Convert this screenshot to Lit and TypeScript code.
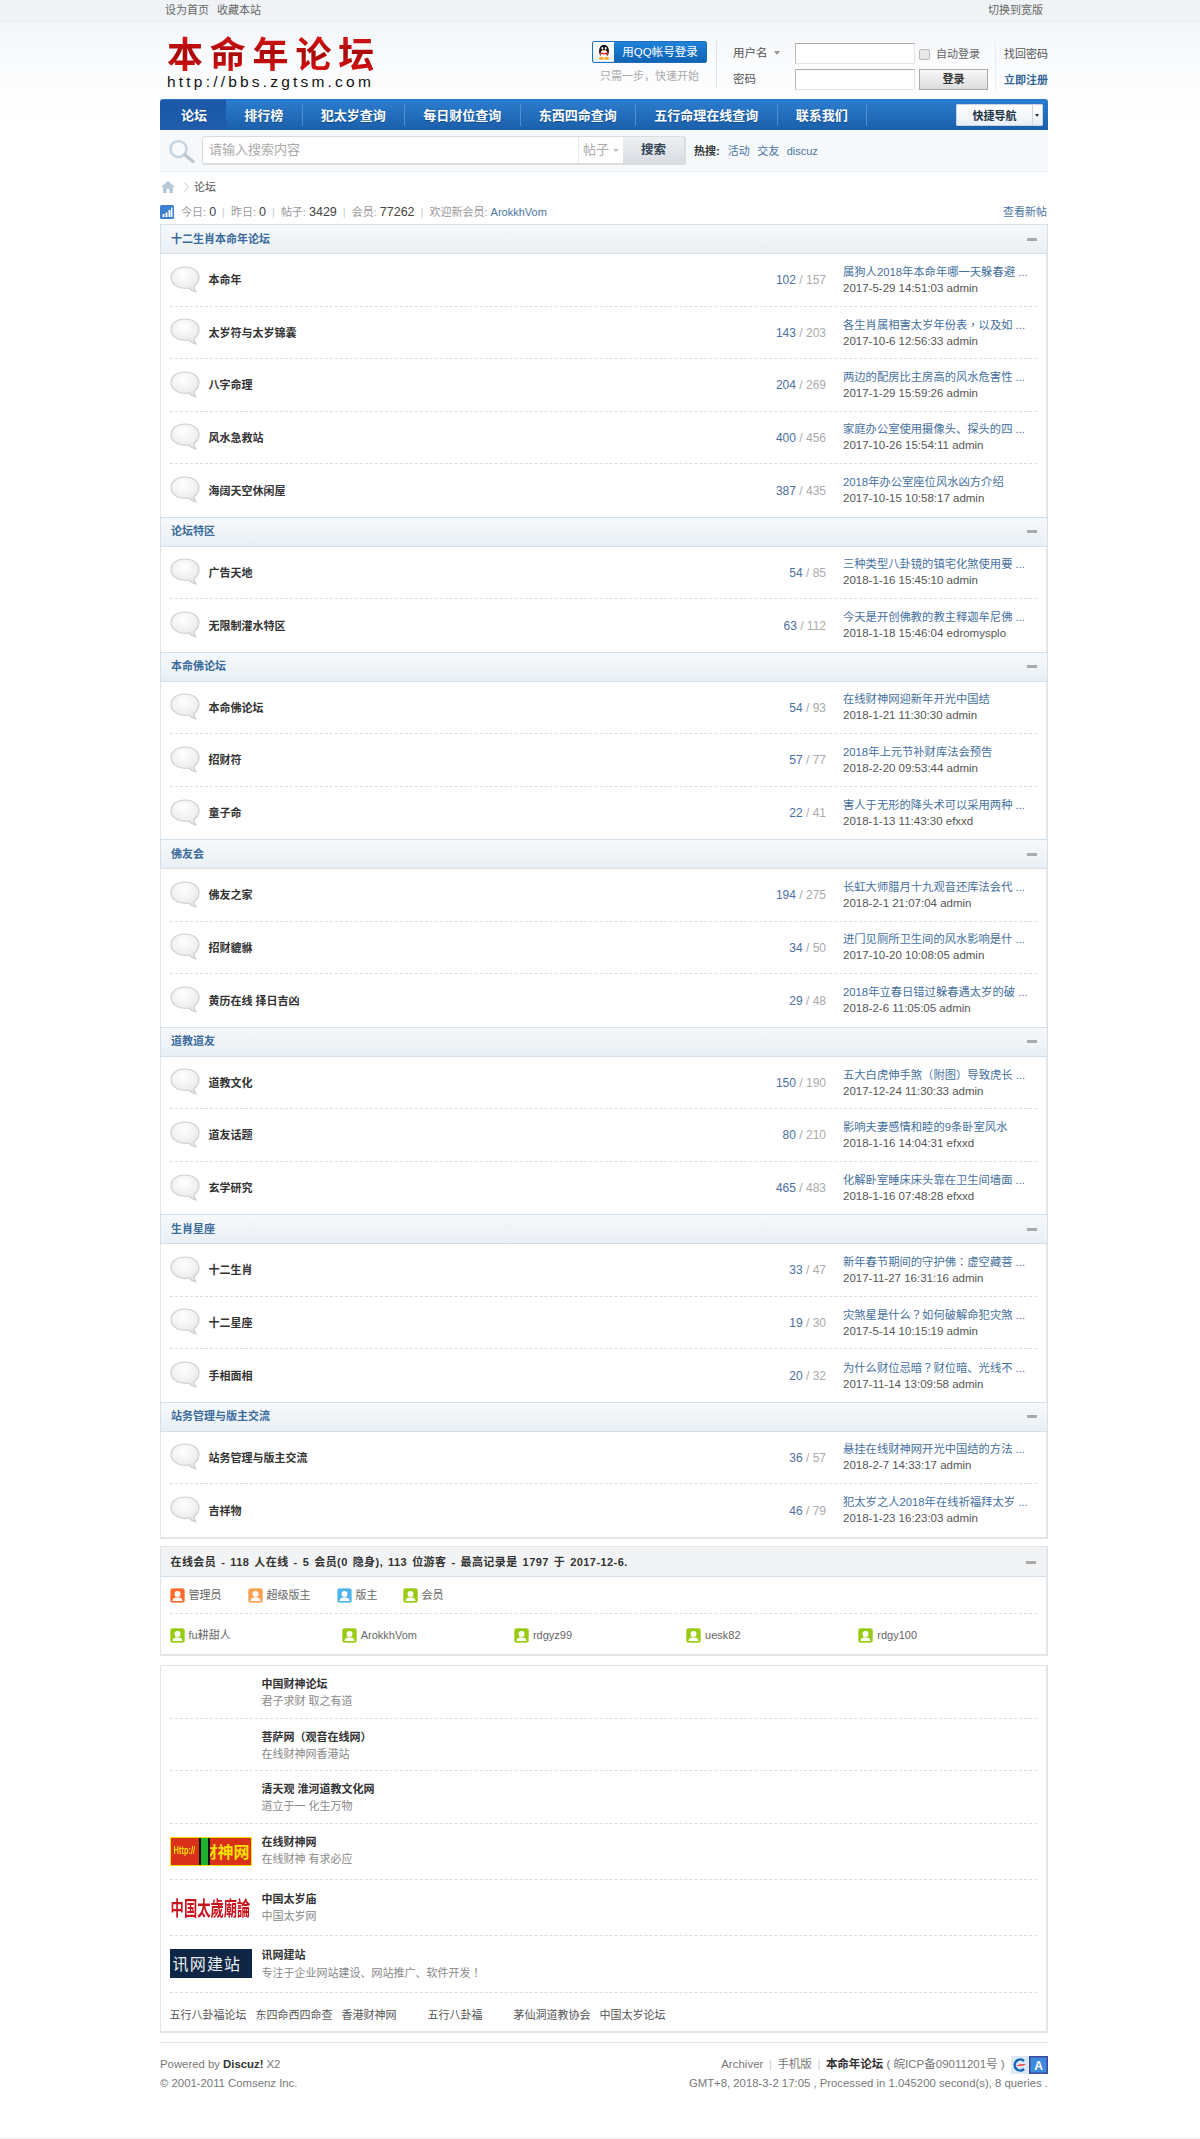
import { LitElement, html, css, svg } from "lit";
import { customElement } from "lit/decorators.js";

type Row = [string, number, number, string, string];
const sections: { name: string; rows: Row[] }[] = [
  { name: "十二生肖本命年论坛", rows: [
    ["本命年", 102, 157, "属狗人2018年本命年哪一天躲春避 ...", "2017-5-29 14:51:03 admin"],
    ["太岁符与太岁锦囊", 143, 203, "各生肖属相害太岁年份表，以及如 ...", "2017-10-6 12:56:33 admin"],
    ["八字命理", 204, 269, "两边的配房比主房高的风水危害性 ...", "2017-1-29 15:59:26 admin"],
    ["风水急救站", 400, 456, "家庭办公室使用摄像头、探头的四 ...", "2017-10-26 15:54:11 admin"],
    ["海阔天空休闲屋", 387, 435, "2018年办公室座位风水凶方介绍", "2017-10-15 10:58:17 admin"],
  ]},
  { name: "论坛特区", rows: [
    ["广告天地", 54, 85, "三种类型八卦镜的镇宅化煞使用要 ...", "2018-1-16 15:45:10 admin"],
    ["无限制灌水特区", 63, 112, "今天是开创佛教的教主释迦牟尼佛 ...", "2018-1-18 15:46:04 edromysplo"],
  ]},
  { name: "本命佛论坛", rows: [
    ["本命佛论坛", 54, 93, "在线财神网迎新年开光中国结", "2018-1-21 11:30:30 admin"],
    ["招财符", 57, 77, "2018年上元节补财库法会预告", "2018-2-20 09:53:44 admin"],
    ["童子命", 22, 41, "害人于无形的降头术可以采用两种 ...", "2018-1-13 11:43:30 efxxd"],
  ]},
  { name: "佛友会", rows: [
    ["佛友之家", 194, 275, "长虹大师腊月十九观音还库法会代 ...", "2018-2-1 21:07:04 admin"],
    ["招财貔貅", 34, 50, "进门见厕所卫生间的风水影响是什 ...", "2017-10-20 10:08:05 admin"],
    ["黄历在线 择日吉凶", 29, 48, "2018年立春日错过躲春遇太岁的破 ...", "2018-2-6 11:05:05 admin"],
  ]},
  { name: "道教道友", rows: [
    ["道教文化", 150, 190, "五大白虎伸手煞（附图）导致虎长 ...", "2017-12-24 11:30:33 admin"],
    ["道友话题", 80, 210, "影响夫妻感情和睦的9条卧室风水", "2018-1-16 14:04:31 efxxd"],
    ["玄学研究", 465, 483, "化解卧室睡床床头靠在卫生间墙面 ...", "2018-1-16 07:48:28 efxxd"],
  ]},
  { name: "生肖星座", rows: [
    ["十二生肖", 33, 47, "新年春节期间的守护佛：虚空藏菩 ...", "2017-11-27 16:31:16 admin"],
    ["十二星座", 19, 30, "灾煞星是什么？如何破解命犯灾煞 ...", "2017-5-14 10:15:19 admin"],
    ["手相面相", 20, 32, "为什么财位忌暗？财位暗、光线不 ...", "2017-11-14 13:09:58 admin"],
  ]},
  { name: "站务管理与版主交流", rows: [
    ["站务管理与版主交流", 36, 57, "悬挂在线财神网开光中国结的方法 ...", "2018-2-7 14:33:17 admin"],
    ["吉祥物", 46, 79, "犯太岁之人2018年在线祈福拜太岁 ...", "2018-1-23 16:23:03 admin"],
  ]},
];

const navItems: [string, boolean][] = [
  ["论坛", true], ["排行榜", false], ["犯太岁查询", false], ["每日财位查询", false],
  ["东西四命查询", false], ["五行命理在线查询", false], ["联系我们", false],
];

/* Centred full-width punctuation, as in the reference's CJK face. */
const punct = (s: string) =>
  s.split(/([，？：！（）])/).map((part, i) => (i % 2 ? html`<span class="pu">${part}</span>` : part));

const userIcon = (c: string, d: string) => html`<svg class="uicon" viewBox="0 0 15 15" width="15" height="15">
  <rect x=".5" y=".5" width="14" height="14" rx="2" fill=${c} stroke=${d}></rect>
  <circle cx="7.5" cy="6" r="3" fill="#fff"></circle>
  <path d="M2.5 13 C3 10 5 9.6 7.5 9.6 S12 10 12.5 13 Z" fill="#fff"></path>
</svg>`;

const bubble = svg`<svg class="bubble" viewBox="0 0 30 27" width="30" height="27">
  <defs><radialGradient id="bg" cx=".45" cy=".3" r=".75"><stop offset="0" stop-color="#fff"></stop><stop offset=".6" stop-color="#f0f0f0"></stop><stop offset="1" stop-color="#e2e2e2"></stop></radialGradient></defs>
  <path d="M15 1 C23 1 29 5.5 29 11.5 C29 15.5 27 18.5 24 20.5 C24.2 22.5 25 24.5 26 26 C23.5 25.5 20.5 24 18.8 22 C17.6 22.2 16.4 22.3 15 22.3 C7 22.3 1 17.5 1 11.5 C1 5.5 7 1 15 1 Z" fill="url(#bg)" stroke="#cfcfcf" stroke-width="1.2"></path>
</svg>`;

const penguin = html`<svg viewBox="0 0 22 22" width="18" height="18">
  <ellipse cx="11" cy="10" rx="6" ry="8" fill="#111"></ellipse>
  <ellipse cx="11" cy="13.5" rx="4.2" ry="5" fill="#fff"></ellipse>
  <ellipse cx="9" cy="6.5" rx="1.1" ry="1.6" fill="#fff"></ellipse>
  <ellipse cx="13" cy="6.5" rx="1.1" ry="1.6" fill="#fff"></ellipse>
  <path d="M8.5 8.6 h5 l-2.5 1.8z" fill="#f5a81c"></path>
  <path d="M6 11 C9 12.6 13 12.6 16 11 L16 13 L14.5 13.2 L15 15.6 L13 13.6 C11 14 9 13.8 6.5 13Z" fill="#e2231a"></path>
  <ellipse cx="7.8" cy="18.8" rx="3" ry="1.6" fill="#f5a81c"></ellipse>
  <ellipse cx="14.2" cy="18.8" rx="3" ry="1.6" fill="#f5a81c"></ellipse>
</svg>`;

@customElement("app-root")
export class AppRoot extends LitElement {
  static styles = css`
    :host { display: block; position: relative; height: 2139px; background: #fff; color: #444; overflow: hidden;
      font: 11px/17px "Liberation Sans", "Noto Sans CJK SC", sans-serif; border-bottom: 1px solid #eee; box-sizing: border-box; }
    a { color: inherit; text-decoration: none; }
    .pu { font-family: "Noto Sans CJK TC", sans-serif; }
    .wrap { width: 888px; margin-left: 160px; }
    .top { height: 22px; background: #eff3f6; border-bottom: 1px dotted #e4e9ed; box-sizing: border-box; color: #666; }
    .top .wrap { display: flex; height: 21px; align-items: center; padding: 0 5px; box-sizing: border-box; gap: 8px; }
    .top .sp { margin-left: auto; }
    .hdbg { background: linear-gradient(#f3f6f9, #fbfcfd 50px, #fff 110px); height: 150px; }
    .hdin { position: relative; margin-top: -150px; }
    .hd { display: flex; height: 77px; }
    .logo { margin: 11px 0 0 7px; width: 215px; }
    .logo b { display: block; font: 700 36px/38px "Noto Sans CJK SC", sans-serif; letter-spacing: 6.8px; white-space: nowrap; height: 38px;
      background: linear-gradient(#e01818, #a80808 55%, #d81212); -webkit-background-clip: text; background-clip: text; color: transparent; }
    .logo span { display: block; font: 400 15.5px/18px "Liberation Sans", sans-serif; letter-spacing: 3.2px; color: #111; white-space: nowrap; margin-top: 2px; }
    .login { margin-left: auto; display: flex; align-items: flex-start; }
    .qq { width: 115px; margin-top: 18.5px; }
    .qbtn { display: flex; height: 20px; border: 1px solid #1a6fc0; border-radius: 2px; background: linear-gradient(#1e82d8, #0f62b4); color: #fff; font-size: 11.5px; line-height: 20px; overflow: hidden; width: 113px; }
    .qbtn i { width: 21px; height: 20px; background: linear-gradient(#fff, #e9f1f8); display: flex; align-items: center; justify-content: center; flex: none; }
    .qbtn span { flex: 1; text-align: center; }
    .qtip { color: #aaa; text-align: center; line-height: 17px; margin-top: 5px; white-space: nowrap; }
    .vd { width: 1px; height: 46px; background: #dde3e8; margin: 18.5px 16px 0 9px; }
    .fm { display: grid; grid-template-columns: 58px 120px 69px; column-gap: 4px; grid-template-rows: 21.5px 21.5px; row-gap: 4.5px; margin-top: 20.5px; }
    .lab { color: #555; font-size: 11.5px; line-height: 21px; display: flex; align-items: center; gap: 6px; }
    .lab i { width: 0; height: 0; border: 3.5px solid transparent; border-top: 4px solid #999; border-bottom: 0; }
    .ipt { border: 1px solid #e4e4e4; border-top: 1.5px solid #aaa; border-left: 1.5px solid #bbb; background: #fff; box-sizing: border-box; }
    .rem { display: flex; align-items: center; gap: 6px; color: #666; padding-top: 3px; }
    .rem i { width: 9px; height: 9px; border: 1px solid #bbb; border-radius: 2px; background: #e8e8e8; display: block; }
    .sub { border: 1px solid #aaa; background: linear-gradient(#f8f8f8, #ddd); font-weight: 700; color: #333; text-align: center; line-height: 19px; }
    .lk { margin: 18.5px 0 0 7px; border-left: 1px solid #eaeef1; padding: 5px 0 0 8px; height: 49px; box-sizing: border-box; display: flex; flex-direction: column; gap: 9px; width: 53px; color: #555; }
    .lk b { color: #369; font-weight: 700; }

    .nav { height: 31px; display: flex; background: linear-gradient(#2c7cce, #1b5faa); border-top: 1px solid #2a78c8; border-radius: 3px 3px 0 0; box-sizing: border-box; position: relative; color: #fff; }
    .nav a { font: 700 13px/22px "Noto Sans CJK SC", sans-serif; padding: 0 18.25px; text-shadow: 0 1px 1px #124a86; border-right: 1px solid #4b8fd4; height: 22px; margin-top: 4px; white-space: nowrap; }
    .nav a.on { background: linear-gradient(#1b59a8, #1f5cab); border: 0; margin: 0; height: 30px; line-height: 30px; padding: 0 19.5px 0 21px; width: 66px; box-sizing: border-box; border-radius: 3px 0 0 0; }
    .qnav { position: absolute; right: 5px; top: 4px; width: 87px; height: 22px; box-sizing: border-box; background: linear-gradient(#fff, #e8f0f7); border: 1px solid #c5d5e4; border-radius: 1px; display: flex; color: #234; font: 700 11px/20px "Noto Sans CJK SC", sans-serif; text-align: center; }
    .qnav span { flex: 1; border-right: 1px solid #ccd6df; }
    .qnav i { width: 9px; position: relative; }
    .qnav i::after { content: ""; position: absolute; left: 2px; top: 9px; border: 2.5px solid transparent; border-top: 3px solid #333; border-bottom: 0; }

    .sch { height: 42px; background: #f6f9fb; border-bottom: 1px solid #e9eef2; box-sizing: border-box; display: flex; align-items: center; padding-left: 8px; }
    .sch svg { flex: none; margin-right: 6px; }
    .sbox { width: 484px; height: 29px; border: 1px solid #dcdcdc; border-width: 1px 2px 2px 1px; border-radius: 3px; box-sizing: border-box; background: #fff; display: flex; font-size: 13px; line-height: 26px; }
    .sbox .ph { flex: 1; color: #aaa; padding-left: 6px; }
    .sbox .sel { width: 45px; border-left: 1px solid #e8e8e8; color: #aaa; padding-left: 4px; display: flex; align-items: center; gap: 4px; box-sizing: border-box; }
    .sbox .sel i { border: 3px solid transparent; border-top: 3.5px solid #bbb; border-bottom: 0; }
    .sbox .go { width: 61px; background: linear-gradient(#eef1f3, #d6dce1); text-align: center; font-weight: 700; color: #345; font-size: 12.5px; }
    .hot { display: flex; margin-left: 8px; gap: 7.5px; color: #4a74a4; line-height: 17px; padding-top: 1px; }
    .hot b { color: #333; margin-right: .5px; }

    .crumb { height: 30px; display: flex; align-items: center; padding-left: 1px; color: #555; }
    .crumb svg { margin-right: 9px; }
    .chev { margin-right: 5px !important; }
    .stat { height: 22px; display: flex; align-items: center; color: #999; padding-bottom: 1.5px; box-sizing: border-box; }
    .stat svg { margin-right: 7px; }
    .stat em { font-style: normal; color: #444; font-size: 12.5px; }
    .stat u { text-decoration: none; color: #ccc; margin: 0 6px; }
    .stat a.b { color: #4a74a4; }
    .stat .r { margin-left: auto; color: #4a74a4; padding-right: 1px; }
    .box { border: 2px solid #e2e6e9; border-width: 0 2px 2px 1.5px; box-sizing: border-box; }
    .cat { height: 30px; box-sizing: border-box; margin: 0 -2px 0 -1.5px; background: linear-gradient(#f6f9fb, #e9eff4); border: 1px solid #d3dfe9; border-width: 1.5px 1px 1.5px 1px; display: flex; align-items: center; justify-content: space-between; padding: 0 10px 0 10.5px; font-weight: 700; color: #3b6b9d; }
    .cat i { width: 10px; height: 3px; background: #aaa; display: block; }
    .row { height: 52.5px; margin: 0 9px 0 8.5px; box-sizing: border-box; border-bottom: 1px dashed #ddd; display: flex; align-items: center; }
    .row.last { border-bottom: 0; }
    .bubble { flex: none; margin: -1px 9px 0 0; }
    .row .t { flex: 1; font-weight: 700; color: #333; padding-top: 1.5px; }
    .row .n { font-size: 12px; color: #4b6f9f; width: 120px; text-align: right; margin-right: 17px; white-space: nowrap; padding-top: 1.5px; }
    .row .n span { color: #aaa; }
    .last-post { width: 194px; line-height: 17px; white-space: nowrap; }
    .last-post a { display: block; color: #446f9e; font-size: 11.3px; padding-top: 1px; }
    .last-post div { font-size: 11.5px; color: #555; margin-top: -1px; }

    .online { margin-top: 7.5px; height: 110px; border: 2px solid #e2e6e9; border-width: 1.5px 2px 2px 1.5px; box-sizing: border-box; }
    .ohd { height: 28px; background: #f2f3f4; border-bottom: 1.5px solid #d3dfe9; display: flex; align-items: center; justify-content: space-between; padding: 1px 10px 0 9.5px; box-sizing: content-box; margin-bottom: -1px; font-weight: 700; color: #333; word-spacing: 1.5px; letter-spacing: .43px; }
    .ohd i { width: 10px; height: 3px; background: #aaa; display: block; }
    .leg { margin: 0 9px 0 8.5px; height: 37.5px; border-bottom: 1px dashed #ddd; display: flex; align-items: center; box-sizing: border-box; color: #666; padding-top: 3px; }
    .leg span { display: flex; align-items: center; gap: 4px; white-space: nowrap; }
    .uicon { flex: none; }
    .mem { margin: 0 9px 0 8.5px; display: grid; grid-template-columns: repeat(5, 172.2px); height: 40px; align-items: center; color: #666; padding-top: 3px; box-sizing: border-box; }
    .mem span { display: flex; align-items: center; gap: 4px; }

    .links { margin-top: 9px; height: 368px; border: 2px solid #e2e6e9; border-width: 1.5px 2px 2px 1.5px; box-sizing: border-box; padding: 0 9px 0 8.5px; }
    .lrow { display: flex; align-items: center; border-bottom: 1px dashed #ddd; box-sizing: border-box; height: 52.5px; }
    .lrow.img { height: 56.4px; }
    .lrow > div:last-child { padding-top: 1.5px; }
    .lrow.img > div:last-child { padding-top: .5px; }
    .lpic { width: 82px; height: 29px; margin-right: 10px; flex: none; overflow: hidden; display: flex; align-items: center; justify-content: center; white-space: nowrap; box-sizing: border-box; }
    .lrow b { display: block; color: #333; }
    .lrow p { margin: 0; color: #888; }
    .p1 { background: #d8301a; border: 1.5px solid #f8e000; color: #f8e000; font: 700 16px/26px "Noto Sans CJK SC", sans-serif; position: relative; justify-content: flex-end; padding-right: 1px; }
    .p1 small { font: 700 7.5px/26px "Liberation Sans", sans-serif; position: absolute; left: 3px; top: 0; transform: scaleY(1.5); }
    .p1 s { position: absolute; left: 28px; top: -2px; width: 11px; height: 30px; background: linear-gradient(90deg, #111 20%, #1fb030 20%, #1fb030 80%, #111 80%); }
    .p2 { color: #c8141c; font: 700 13.3px/29px "Noto Sans CJK SC", sans-serif; background: #fff; }
    .p2 span { display: inline-block; transform: scaleY(1.5); }
    .p3 { background: #0f2644; color: #e8edf2; font: 400 16px/29px "Noto Sans CJK SC", sans-serif; letter-spacing: 1.2px; justify-content: flex-start; padding-left: 3px; }
    .tlinks { display: grid; grid-template-columns: repeat(6, 86px); height: 40px; align-items: center; color: #555; white-space: nowrap; font-size: 11px; padding-top: 5px; box-sizing: border-box; }

    .ft { margin-top: 9px; border-top: 1.5px solid #dfe3e5; display: flex; justify-content: space-between; padding-top: 12px; color: #777; font-size: 11.35px; line-height: 19px; }
    .ft b { color: #333; }
    .ft .rt { text-align: right; }
    .ft .l1 { display: flex; justify-content: flex-end; align-items: center; height: 19px; font-size: 11.5px; white-space: nowrap; }
    .ft .l1 u { text-decoration: none; color: #ccc; margin: 0 5.5px; }
    .ft .l1 svg { flex: none; }
  `;

  render() {
    return html`
      <div class="top"><div class="wrap"><a>设为首页</a><a>收藏本站</a><a class="sp">切换到宽版</a></div></div>
      <div class="hdbg"></div>
      <div class="wrap hdin">
        <div class="hd">
          <div class="logo"><b>本命年论坛</b><span>http://bbs.zgtsm.com</span></div>
          <div class="login">
            <div class="qq">
              <div class="qbtn"><i>${penguin}</i><span>用QQ帐号登录</span></div>
              <div class="qtip">只需一步，快速开始</div>
            </div>
            <div class="vd"></div>
            <div class="fm">
              <div class="lab">用户名 <i></i></div><div class="ipt"></div><div class="rem"><i></i>自动登录</div>
              <div class="lab">密码</div><div class="ipt"></div><div class="sub">登录</div>
            </div>
            <div class="lk"><a>找回密码</a><b>立即注册</b></div>
          </div>
        </div>
        <div class="nav">
          ${navItems.map(([t, on]) => html`<a class=${on ? "on" : ""}>${t}</a>`)}
          <div class="qnav"><span>快捷导航</span><i></i></div>
        </div>
        <div class="sch">
          <svg width="28" height="24" viewBox="0 0 28 24"><circle cx="10.5" cy="10" r="8" fill="#f8fbfd" stroke="#c4d6e4" stroke-width="2.6"></circle><path d="M17 16 L25 22.5" stroke="#bcc6cc" stroke-width="3.4" stroke-linecap="round"></path></svg>
          <div class="sbox"><span class="ph">请输入搜索内容</span><span class="sel">帖子<i></i></span><span class="go">搜索</span></div>
          <div class="hot"><b>热搜:</b><a>活动</a><a>交友</a><a>discuz</a></div>
        </div>
        <div class="crumb">
          <svg width="14" height="12" viewBox="0 0 14 12"><path d="M7 0 L14 6 H12 V12 H8.4 V8 H5.6 V12 H2 V6 H0 Z" fill="#b4c8da"></path></svg>
          <svg class="chev" width="5" height="10" viewBox="0 0 5 10"><path d="M.5 .5 L4.5 5 L.5 9.5" fill="none" stroke="#c4c8cc"></path></svg>
          <a>论坛</a>
        </div>
        <div class="stat">
          <svg width="14" height="14" viewBox="0 0 14 14"><rect width="14" height="14" rx="1.5" fill="#3b80cf"></rect><path d="M2.5 9h2v3h-2zM5.5 7.5h2V12h-2zM8.5 5h2v7h-2zM11 2.5h1.5V12H11z" fill="#fff"></path></svg>
          今日:&nbsp;<em>0</em><u>|</u>昨日:&nbsp;<em>0</em><u>|</u>帖子:&nbsp;<em>3429</em><u>|</u>会员:&nbsp;<em>77262</em><u>|</u>欢迎新会员:&nbsp;<a class="b">ArokkhVom</a>
          <a class="r">查看新帖</a>
        </div>
        <div class="box">
          ${sections.map((s) => html`
            <div class="cat"><span>${s.name}</span><i></i></div>
            ${s.rows.map((r, i) => html`
              <div class="row ${i === s.rows.length - 1 ? "last" : ""}">
                ${bubble}
                <div class="t">${r[0]}</div>
                <div class="n">${r[1]} <span>/ ${r[2]}</span></div>
                <div class="last-post"><a>${punct(r[3])}</a><div>${r[4]}</div></div>
              </div>`)}
          `)}
        </div>
        <div class="online">
          <div class="ohd"><span>在线会员 - 118 人在线 - 5 会员(0 隐身), 113 位游客 - 最高记录是 1797 于 2017-12-6.</span><i></i></div>
          <div class="leg">
            <span style="width:78px">${userIcon("#fb6a2a", "#f2a27a")}管理员</span>
            <span style="width:89px">${userIcon("#fba04e", "#f6c08c")}超级版主</span>
            <span style="width:66px">${userIcon("#4db4ee", "#8dd0f4")}版主</span>
            <span>${userIcon("#97cc10", "#b8dc5a")}会员</span>
          </div>
          <div class="mem">
            ${["fu耕甜人", "ArokkhVom", "rdgyz99", "uesk82", "rdgy100"].map((m) => html`<span>${userIcon("#97cc10", "#b8dc5a")}${m}</span>`)}
          </div>
        </div>
        <div class="links">
          <div class="lrow"><div class="lpic"></div><div><b>中国财神论坛</b><p>君子求财 取之有道</p></div></div>
          <div class="lrow"><div class="lpic"></div><div><b>${punct("菩萨网（观音在线网）")}</b><p>在线财神网香港站</p></div></div>
          <div class="lrow"><div class="lpic"></div><div><b>清天观 淮河道教文化网</b><p>道立于一 化生万物</p></div></div>
          <div class="lrow img"><div class="lpic p1"><small>Http://</small>财神网<s></s></div><div><b>在线财神网</b><p>在线财神 有求必应</p></div></div>
          <div class="lrow img"><div class="lpic p2"><span>中国太歲廟論</span></div><div><b>中国太岁庙</b><p>中国太岁网</p></div></div>
          <div class="lrow img"><div class="lpic p3">讯网建站</div><div><b>讯网建站</b><p>${punct("专注于企业网站建设、网站推广、软件开发！")}</p></div></div>
          <div class="tlinks"><a>五行八卦福论坛</a><a>东四命西四命查</a><a>香港财神网</a><a>五行八卦福</a><a>茅仙洞道教协会</a><a>中国太岁论坛</a></div>
        </div>
        <div class="ft">
          <div>Powered by <b>Discuz!</b> X2<br />© 2001-2011 Comsenz Inc.</div>
          <div class="rt">
            <div class="l1">Archiver<u>|</u>手机版<u>|</u><b>本命年论坛</b>&nbsp;( 皖ICP备09011201号 )&nbsp;&nbsp;
              <svg width="18" height="18" viewBox="0 0 18 18"><rect width="18" height="18" fill="#dbe9f6"></rect><path d="M13 5 A5.5 5.5 0 1 0 13 13" fill="none" stroke="#1667b8" stroke-width="2.6"></path><path d="M5 10 C8 8 12 8 15 8 C12 10 9 10 5 10Z" fill="#e43a2a"></path></svg>
              <svg width="19" height="18" viewBox="0 0 19 18"><rect x=".75" y=".75" width="17.5" height="16.5" fill="#3e8ade" stroke="#3c4a9a" stroke-width="1.5"></rect><text x="9.5" y="13.5" text-anchor="middle" font-size="12" font-weight="700" fill="#fff" font-family="Liberation Sans">A</text></svg>
            </div>
            <div>GMT+8, 2018-3-2 17:05 , Processed in 1.045200 second(s), 8 queries .</div>
          </div>
        </div>
      </div>
    `;
  }
}
